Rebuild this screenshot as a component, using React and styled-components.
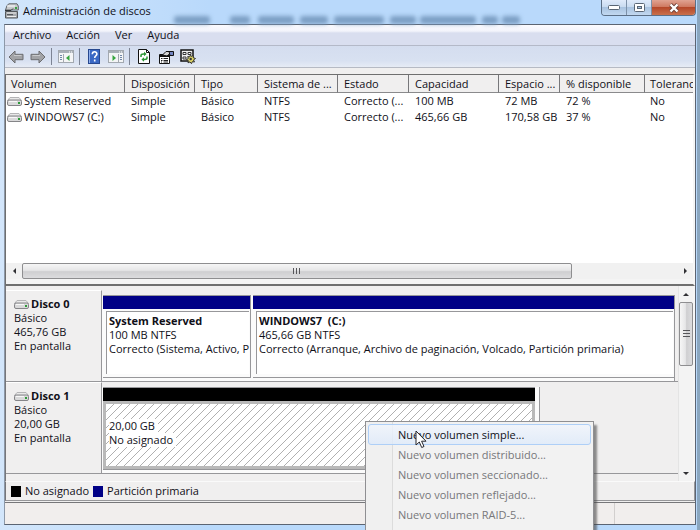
import React from 'react';
import styled, { createGlobalStyle, css } from 'styled-components';

const navy = '#000086';

const GlobalStyle = createGlobalStyle`
  *, *::before, *::after { box-sizing: border-box; }
  body {
    margin: 0;
    font: 11px/14px "Open Sans", "Noto Sans", sans-serif;
    color: #101018;
    background: #b9d9fb;
  }
  button { font: inherit; color: inherit; border: 0; padding: 0; background: none; }
  ul { list-style: none; margin: 0; padding: 0; }
  h2, h3, p { margin: 0; font: inherit; }
  h2, h3 { font-weight: 700; }
  svg { display: block; }
`;

const Frame = styled.div`
  position: relative;
  display: flex;
  flex-direction: column;
  height: 100vh;
  overflow: hidden;
  padding: 0 1px 5px 4px;
  background: linear-gradient(90deg, #d3e6fb 0, #b9d9fb 30%, #b9d9fb 100%);
  border-right: 3px solid #8aa6bf;
`;

const TitleBar = styled.header`
  position: relative;
  display: flex;
  align-items: flex-start;
  justify-content: space-between;
  height: 24px;
  flex: none;
`;

const Title = styled.div`
  display: flex;
  align-items: center;
  gap: 4px;
  height: 22px;
  font-size: 11px;
`;

const Haze = styled.svg`
  position: absolute;
  left: 160px;
  bottom: 0;
  filter: blur(2px);
`;

const WindowButtons = styled.div`
  display: flex;
  height: 16px;
  border: 1px solid #5c6f86;
  border-top: 0;
  border-radius: 0 0 4px 4px;
  overflow: hidden;
`;

const WindowButton = styled.button`
  display: grid;
  place-items: center;
  width: ${p => (p.$close ? '43px' : '25px')};
  border-right: ${p => (p.$close ? '0' : '1px solid #7c90a8')};
  background: ${p =>
    p.$close
      ? 'linear-gradient(#e0a392 0, #cf7a62 45%, #b5482a 50%, #c9704c 100%)'
      : 'linear-gradient(#dfeafa 0, #c9dbf0 45%, #a9c3e0 50%, #c2d8f0 100%)'};
`;

const Client = styled.main`
  display: flex;
  flex-direction: column;
  flex: 1;
  min-height: 0;
  border: 1px solid #5b6472;
  border-left-color: #8c98a8;
  background: #f0efef;
`;

const MenuBar = styled.nav`
  display: flex;
  align-items: center;
  gap: 15px;
  height: 21px;
  flex: none;
  padding: 0 8px;
  background: linear-gradient(#fbfbfe 0, #f3f4fb 30%, #d9deef 40%, #d9deef 100%);
  border-bottom: 1px solid #b4b9c8;
`;

const ToolBar = styled.div`
  display: flex;
  align-items: center;
  height: 22px;
  flex: none;
  background: linear-gradient(#d4ddef 0, #d8e1f1 70%, #e6ebf5 100%);
  border-bottom: 1px solid #b6bac4;
`;

const ToolButton = styled.button`
  display: grid;
  place-items: center;
  width: 22px;
  height: 20px;
`;

const Divider = styled.span`
  width: 1px;
  height: 17px;
  margin: 0 3px 0 2px;
  background: #7d8494;
`;

const ListPane = styled.section`
  display: flex;
  flex-direction: column;
  height: 212px;
  flex: none;
  margin-top: 6px;
  border: 1px solid #6f6f6f;
  border-width: 1px 2px 2px 1px;
  border-right-color: #f6f6f6;
  background: #fff;
`;

const ListBody = styled.div`
  flex: 1;
  overflow: hidden;
`;

const VolumeTable = styled.table`
  width: 100%;
  table-layout: fixed;
  border-collapse: separate;
  border-spacing: 0;
  text-align: left;
`;

const Column = styled.col`
  width: ${p => p.$width};
`;

const HeadCell = styled.th`
  height: 18px;
  padding: 0 0 0 6px;
  font-weight: 400;
  line-height: 16px;
  white-space: nowrap;
  background: #f0efef;
  border-right: 1px solid #77777a;
  border-bottom: 1px solid #8a8a8c;
  &:first-child { padding-left: 5px; }
  &:last-child { padding-left: 5px; border-right: 0; }
`;

const Cell = styled.td`
  height: 16px;
  padding: 0 0 0 6px;
  line-height: 16px;
  white-space: nowrap;
  &:first-child { padding-left: 1px; }
  &:last-child { padding-left: 5px; }
`;

const VolumeName = styled.span`
  display: flex;
  align-items: center;
  gap: 2px;
`;

const HScroll = styled.div`
  display: flex;
  height: 16px;
  flex: none;
  background: #f1f1f1;
  margin-bottom: 5px;
  box-shadow: 0 5px 0 #f4f4f4;
`;

const VScroll = styled.div`
  display: flex;
  flex-direction: column;
  width: 15px;
  flex: none;
  border-left: 1px solid #e4e4e4;
  background: #f3f3f3;
`;

const ArrowButton = styled.button`
  display: grid;
  place-items: center;
  flex: none;
  width: ${p => (p.$tall ? '100%' : '16px')};
  height: ${p => (p.$tall ? '16px' : '100%')};
`;

const Track = styled.div`
  display: flex;
  flex: 1;
  min-height: 0;
  min-width: 0;
  flex-direction: ${p => (p.$vertical ? 'column' : 'row')};
`;

const Thumb = styled.div`
  display: grid;
  place-items: center;
  flex: 0 0 ${p => p.$size};
  border: 1px solid #8e8e90;
  border-radius: 2px;
  background: linear-gradient(${p => (p.$vertical ? '90deg' : '180deg')}, #f6f6f6 0, #e6e6e7 45%, #cfcfd1 55%, #dcdcde 100%);
`;

const DiskPane = styled.section`
  display: flex;
  flex: 1;
  min-height: 0;
  border-left: 1px solid #77777a;
  border-right: 2px solid #f6f6f6;
`;

const DiskList = styled.div`
  flex: 1;
  min-width: 0;
  padding-top: 4px;
`;

const DiskRow = styled.article`
  display: flex;
  height: 92px;
  border-bottom: 1px solid #97979a;
`;

const DiskLabel = styled.div`
  width: 96px;
  flex: none;
  padding: 6px 8px 0;
  border-top: 1px solid #fff;
  border-right: 1px solid #97979a;
`;

const DiskName = styled.h2`
  display: flex;
  align-items: center;
  gap: 2px;
`;

const Partitions = styled.div`
  display: flex;
  gap: 2px;
  flex: 0 0 ${p => p.$width};
  margin-top: 5px;
  padding: 0 ${p => (p.$unallocated ? '4px' : '0')} 3px 1px;
  background: #fbfbfb;
  border-right: 1px solid #97979a;
`;

const Partition = styled.div`
  display: flex;
  flex-direction: column;
  flex: ${p => (p.$width ? `0 0 ${p.$width}` : '1')};
  min-width: 0;
  border-right: ${p => (p.$line ? '1px solid #97979a' : '0')};
  border-bottom: 1px solid #97979a;
`;

const PartitionBar = styled.div`
  height: 14px;
  flex: none;
  border-top: 1px solid #97979a;
  background: ${p => p.$color};
`;

const PartitionBody = styled.div`
  flex: 1;
  margin: 2px 1px 3px 3px;
  padding: 2px 0 0 2px;
  border: 1px solid #97979a;
  border-width: 1px 0 0 1px;
  background: #fff;
  white-space: nowrap;
  ${p =>
    p.$hatched &&
    css`
      margin: 0;
      padding: 15px 0 0 3px;
      border: 3px solid #b9b9b9;
      background: #fff linear-gradient(135deg, transparent 45%, #b0b0b0 46%, #b0b0b0 54%, transparent 55%);
      background-size: 8px 8px;
      p { width: max-content; padding-right: 3px; background: #fff; }
    `}
`;

const Legend = styled.footer`
  display: flex;
  align-items: center;
  gap: 4px;
  height: 20px;
  flex: none;
  padding: 0 5px;
  border-top: 1px solid #fafafa;
  border-left: 1px solid #77777a;
  border-right: 1px solid #97979a;
  border-bottom: 1px solid #97979a;
`;

const LegendItem = styled.span`
  display: flex;
  align-items: center;
  gap: 4px;
  &::before {
    content: '';
    width: 10px;
    height: 11px;
    background: ${p => p.$color};
  }
`;

const StatusBar = styled.div`
  display: flex;
  justify-content: flex-end;
  height: 22px;
  flex: none;
  margin-top: 1px;
  border-top: 1px solid #77777a;
  background: #f1eeed;
`;

const StatusCell = styled.span`
  width: 81px;
  border-left: 1px solid #d2cfce;
`;

const ContextMenu = styled.ul`
  position: absolute;
  left: 365px;
  top: 421px;
  width: 229px;
  padding: 2px 2px 8px;
  border: 1px solid #8f8f92;
  background: linear-gradient(90deg, #f0f0f0 26px, #dcdcdc 26px, #dcdcdc 27px, #f2f2f2 27px);
  box-shadow: 3px 4px 2px rgba(70, 70, 70, 0.6);
`;

const MenuItem = styled.button`
  display: block;
  width: 100%;
  height: 20px;
  padding-left: 29px;
  text-align: left;
  font-size: 11px;
  color: #77777a;
  border: 1px solid transparent;
  border-radius: 3px;
  ${p =>
    p.$active &&
    css`
      height: 21px;
      color: #101018;
      border-color: #aecff7;
      background: linear-gradient(rgba(240, 245, 253, 0.8), rgba(222, 234, 250, 0.8));
    `}
`;

const Pointer = styled.svg`
  position: absolute;
  left: 415px;
  top: 430px;
`;

const DriveIcon = () => (
  <svg width="15" height="9" viewBox="0 0 15 9" aria-hidden="true">
    <path d="M3 .5h9l2.500 3H.5z" fill="#e9e9e9" stroke="#b4b4b6" />
    <rect x=".5" y="3" width="14" height="5.500" rx="1.500" fill="#d9d9da" stroke="#858588" />
    <path d="M2 4.500h8" stroke="#f8f8f8" />
    <rect x="11" y="5" width="2" height="2" fill="#2f9a3a" />
  </svg>
);

const AppIcon = () => (
  <svg width="15" height="16" viewBox="0 0 15 16" aria-hidden="true">
    <path d="M3 2.500 5 .8h8L14.300 3v4H1.500z" fill="#c8cacc" stroke="#606468" />
    <path d="M3 3h8" stroke="#fff" />
    <rect x="11" y="4" width="2" height="2" fill="#36a040" />
    <path d="M1.500 8.500h12V15h-12z" fill="#a6a9ad" stroke="#54585c" />
    <path d="M3 10h9M3 13.500h9" stroke="#eee" />
    <path d="M3 11.700h6" stroke="#44484c" />
    <path d="M1 7.500h6l2-2" stroke="#33373b" fill="none" />
  </svg>
);

const Arrow = ({ flip }) => (
  <svg width="16" height="14" viewBox="0 0 16 14" aria-hidden="true">
    <path
      d={flip ? 'M15 7 9 1v3.300H1v5.400h8V13z' : 'M1 7l6-6v3.300h8v5.400H7V13z'}
      fill="#a2a3a6"
      stroke="#6c6d70"
      strokeLinejoin="round"
    />
    <path d={flip ? 'M2.500 5.500H10' : 'M6 5.500h7.500'} stroke="#c9cacc" />
  </svg>
);

const PaneIcon = ({ flip }) => (
  <svg width="16" height="13" viewBox="0 0 16 13" aria-hidden="true">
    <rect x=".5" y=".5" width="15" height="12" fill="#f4f5f6" stroke="#a3a9b0" />
    <path d="M1 2h14" stroke="#a9b0b8" strokeWidth="2" />
    <path d="M11 2h1M13 2h1" stroke="#fff" />
    {flip ? (
      <>
        <path d="M10.500 4v8" stroke="#a3a9b0" />
        <path d="M12 5.500h2M12 7.500h2M12 9.500h2" stroke="#6f87a8" />
        <path d="M4.500 5v6L8 8z" fill="#37a53f" />
      </>
    ) : (
      <>
        <path d="M5.500 4v8" stroke="#a3a9b0" />
        <path d="M2 5.500h2M2 7.500h2M2 9.500h2" stroke="#6f87a8" />
        <path d="M11.500 5v6L8 8z" fill="#37a53f" />
      </>
    )}
  </svg>
);

const HelpIcon = () => (
  <svg width="12" height="15" viewBox="0 0 12 15" aria-hidden="true">
    <rect x=".5" y=".5" width="11" height="14" fill="#3a68c4" stroke="#27488f" />
    <path d="M1.500 1v13" stroke="#8fb0ee" />
    <path d="M4.300 5.300c0-3.300 4.600-3.200 4.600-.4 0 1.900-2.200 1.900-2.200 4.100M6.700 10.500v2" stroke="#fff" strokeWidth="1.600" fill="none" />
  </svg>
);

const RefreshIcon = () => (
  <svg width="12" height="15" viewBox="0 0 12 15" aria-hidden="true">
    <path d="M.5.5h8l3 3v11H.5z" fill="#fff" stroke="#111" />
    <path d="M8.500.5v3h3" fill="none" stroke="#111" />
    <path d="M3 8V6.500C3 5.200 4 5 5.500 5H7M9 7.500V9c0 1.300-1 1.500-2.500 1.500H5" fill="none" stroke="#2c9636" strokeWidth="1.500" />
    <path d="M6 2.800v4.400L8.600 5zM6 8.300v4.400L3.400 10.500z" fill="#2c9636" />
  </svg>
);

const PropertiesIcon = () => (
  <svg width="15" height="14" viewBox="0 0 15 14" aria-hidden="true">
    <path d="M.5 4.500h10v9H.5z" fill="#fff" stroke="#111" />
    <path d="M1 6h9" stroke="#111" strokeWidth="2" />
    <path d="M2 8.500h1.500M4.500 8.500H9M2 10.500h1.500M4.500 10.500H9M2 12h1M4.500 12H9" stroke="#222" />
    <path d="M3.500 5 7 1.500h4L10.500 4 8 6z" fill="#d5d5d5" stroke="#111" />
    <path d="M10 1.500h4.500v4H11z" fill="#7184c2" stroke="#111" />
  </svg>
);

const SettingsIcon = () => (
  <svg width="16" height="15" viewBox="0 0 16 15" aria-hidden="true">
    <rect x="1" y="1" width="12" height="11" fill="#f1f1f1" stroke="#111" strokeWidth="1.500" />
    <path d="M3 3.500h3v2H3zM8 3.500h3v2H8zM3 8h3v2H3z" fill="#fff" stroke="#333" />
    <path d="m10.500 5.500.8 2 2-1 0 2.200 2.200.8-2 1.500 1 2-2.200-.3-.8 2-1.500-1.800-2 .9.300-2.200-2-.9 2-1.200-.6-2 2 .4z" fill="#ddd466" stroke="#333" />
    <circle cx="10.700" cy="10" r="1.200" fill="#333" />
  </svg>
);

const Caret = ({ d, w = 6, h = 6 }) => (
  <svg width={w} height={h} viewBox={`0 0 ${w} ${h}`} aria-hidden="true">
    <path d={d} fill="#303034" />
  </svg>
);

const columns = [
  ['Volumen', '119px'],
  ['Disposición', '70px'],
  ['Tipo', '63px'],
  ['Sistema de ...', '80px'],
  ['Estado', '71px'],
  ['Capacidad', '90px'],
  ['Espacio ...', '61px'],
  ['% disponible', '85px'],
  ['Toleranc', 'auto'],
];

const volumes = [
  ['System Reserved', 'Simple', 'Básico', 'NTFS', 'Correcto (...', '100 MB', '72 MB', '72 %', 'No'],
  ['WINDOWS7 (C:)', 'Simple', 'Básico', 'NTFS', 'Correcto (...', '465,66 GB', '170,58 GB', '37 %', 'No'],
];

const disks = [
  {
    name: 'Disco 0',
    size: '465,76 GB',
    parts: [
      { title: 'System Reserved', lines: ['100 MB NTFS', 'Correcto (Sistema, Activo, P'], width: '148px', color: navy },
      {
        title: 'WINDOWS7\u00a0 (C:)',
        lines: ['465,66 GB NTFS', 'Correcto (Arranque, Archivo de paginación, Volcado, Partición primaria)'],
        color: navy,
      },
    ],
  },
  {
    name: 'Disco 1',
    size: '20,00 GB',
    parts: [{ lines: ['20,00 GB', 'No asignado'], color: '#000', hatched: true }],
  },
];

const menuItems = [
  'Nuevo volumen simple...',
  'Nuevo volumen distribuido...',
  'Nuevo volumen seccionado...',
  'Nuevo volumen reflejado...',
  'Nuevo volumen RAID-5...',
];

const Disk = ({ disk }) => {
  const unallocated = disk.parts.some(part => part.hatched);
  return (
    <DiskRow>
      <DiskLabel>
        <DiskName>
          <DriveIcon />
          {disk.name}
        </DiskName>
        <p>Básico</p>
        <p>{disk.size}</p>
        <p>En pantalla</p>
      </DiskLabel>
      <Track>
        <Partitions $width={unallocated ? '76%' : 'calc(100% - 3px)'} $unallocated={unallocated}>
          {disk.parts.map((part, i) => (
            <Partition key={i} $width={part.width} $line={Boolean(part.width)}>
              <PartitionBar $color={part.color} />
              <PartitionBody $hatched={part.hatched}>
                {part.title && <h3>{part.title}</h3>}
                {part.lines.map(line => (
                  <p key={line}>{line}</p>
                ))}
              </PartitionBody>
            </Partition>
          ))}
        </Partitions>
      </Track>
    </DiskRow>
  );
};

const blobs = [
  [10, 36], [66, 20], [94, 36], [136, 28], [170, 50], [226, 26], [256, 56], [318, 16], [338, 18],
];

export default function App() {
  return (
    <>
      <GlobalStyle />
      <Frame>
        <TitleBar>
          <Haze width="370" height="10" aria-hidden="true">
            {blobs.map(([x, w]) => (
              <rect key={x} x={x} y="2" width={w} height="8" rx="3" fill="#7c9fc4" />
            ))}
          </Haze>
          <Title>
            <AppIcon />
            Administración de discos
          </Title>
          <WindowButtons>
            <WindowButton aria-label="Minimizar">
              <svg width="12" height="5"><rect x=".5" y=".5" width="11" height="4" rx="1" fill="#fff" stroke="#5a6675" /></svg>
            </WindowButton>
            <WindowButton aria-label="Maximizar">
              <svg width="11" height="9">
                <rect x=".5" y=".5" width="10" height="8" rx="1" fill="#fff" stroke="#5a6675" />
                <rect x="3.500" y="3.500" width="4" height="2" fill="#a9c3e0" stroke="#5a6675" />
              </svg>
            </WindowButton>
            <WindowButton $close aria-label="Cerrar">
              <svg width="12" height="10" viewBox="0 0 12 10">
                <path d="m2.500 1.500 7 7m0-7-7 7" stroke="#6a4038" strokeWidth="4" />
                <path d="m2.500 1.500 7 7m0-7-7 7" stroke="#fff" strokeWidth="2.400" />
              </svg>
            </WindowButton>
          </WindowButtons>
        </TitleBar>
        <Client>
          <MenuBar>
            <button>Archivo</button>
            <button>Acción</button>
            <button>Ver</button>
            <button>Ayuda</button>
          </MenuBar>
          <ToolBar>
            <ToolButton aria-label="Atrás"><Arrow /></ToolButton>
            <ToolButton aria-label="Adelante"><Arrow flip /></ToolButton>
            <Divider />
            <ToolButton aria-label="Mostrar árbol"><PaneIcon /></ToolButton>
            <Divider />
            <ToolButton aria-label="Ayuda"><HelpIcon /></ToolButton>
            <ToolButton aria-label="Mostrar acciones"><PaneIcon flip /></ToolButton>
            <Divider />
            <ToolButton aria-label="Actualizar"><RefreshIcon /></ToolButton>
            <ToolButton aria-label="Propiedades"><PropertiesIcon /></ToolButton>
            <ToolButton aria-label="Configuración"><SettingsIcon /></ToolButton>
          </ToolBar>
          <ListPane>
            <ListBody>
              <VolumeTable>
                <colgroup>
                  {columns.map(([name, width]) => <Column key={name} $width={width} />)}
                </colgroup>
                <thead>
                  <tr>{columns.map(([name]) => <HeadCell key={name} scope="col">{name}</HeadCell>)}</tr>
                </thead>
                <tbody>
                  {volumes.map(([name, ...rest]) => (
                    <tr key={name}>
                      <Cell><VolumeName><DriveIcon />{name}</VolumeName></Cell>
                      {rest.map((value, i) => <Cell key={i}>{value}</Cell>)}
                    </tr>
                  ))}
                </tbody>
              </VolumeTable>
            </ListBody>
            <HScroll>
              <ArrowButton aria-label="Izquierda"><Caret w={3} d="M3 0v6L0 3z" /></ArrowButton>
              <Track>
                <Thumb $size="84%">
                  <svg width="8" height="6"><path d="M.5 0v6M3.500 0v6M6.500 0v6" stroke="#56565a" /></svg>
                </Thumb>
              </Track>
              <ArrowButton aria-label="Derecha"><Caret w={3} d="M0 0v6l3-3z" /></ArrowButton>
            </HScroll>
          </ListPane>
          <DiskPane>
            <DiskList>
              {disks.map(disk => <Disk key={disk.name} disk={disk} />)}
            </DiskList>
            <VScroll>
              <ArrowButton $tall aria-label="Arriba"><Caret h={3} d="M0 3h6L3 0z" /></ArrowButton>
              <Track $vertical>
                <Thumb $vertical $size="39%">
                  <svg width="7" height="8"><path d="M0 .5h7M0 3.500h7M0 6.500h7" stroke="#56565a" /></svg>
                </Thumb>
              </Track>
              <ArrowButton $tall aria-label="Abajo"><Caret h={3} d="M0 0h6L3 3z" /></ArrowButton>
            </VScroll>
          </DiskPane>
          <Legend>
            <LegendItem $color="#000">No asignado</LegendItem>
            <LegendItem $color={navy}>Partición primaria</LegendItem>
          </Legend>
          <StatusBar><StatusCell /></StatusBar>
        </Client>
        <ContextMenu>
          {menuItems.map((item, i) => (
            <li key={item}><MenuItem $active={i === 0} disabled={i > 0}>{item}</MenuItem></li>
          ))}
        </ContextMenu>
        <Pointer width="12" height="19" viewBox="0 0 12 19" aria-hidden="true">
          <path d="M1 1v14l3.300-3 2.400 5.500 2.300-1-2.400-5.300H11z" fill="#fff" stroke="#26262c" />
        </Pointer>
      </Frame>
    </>
  );
}
